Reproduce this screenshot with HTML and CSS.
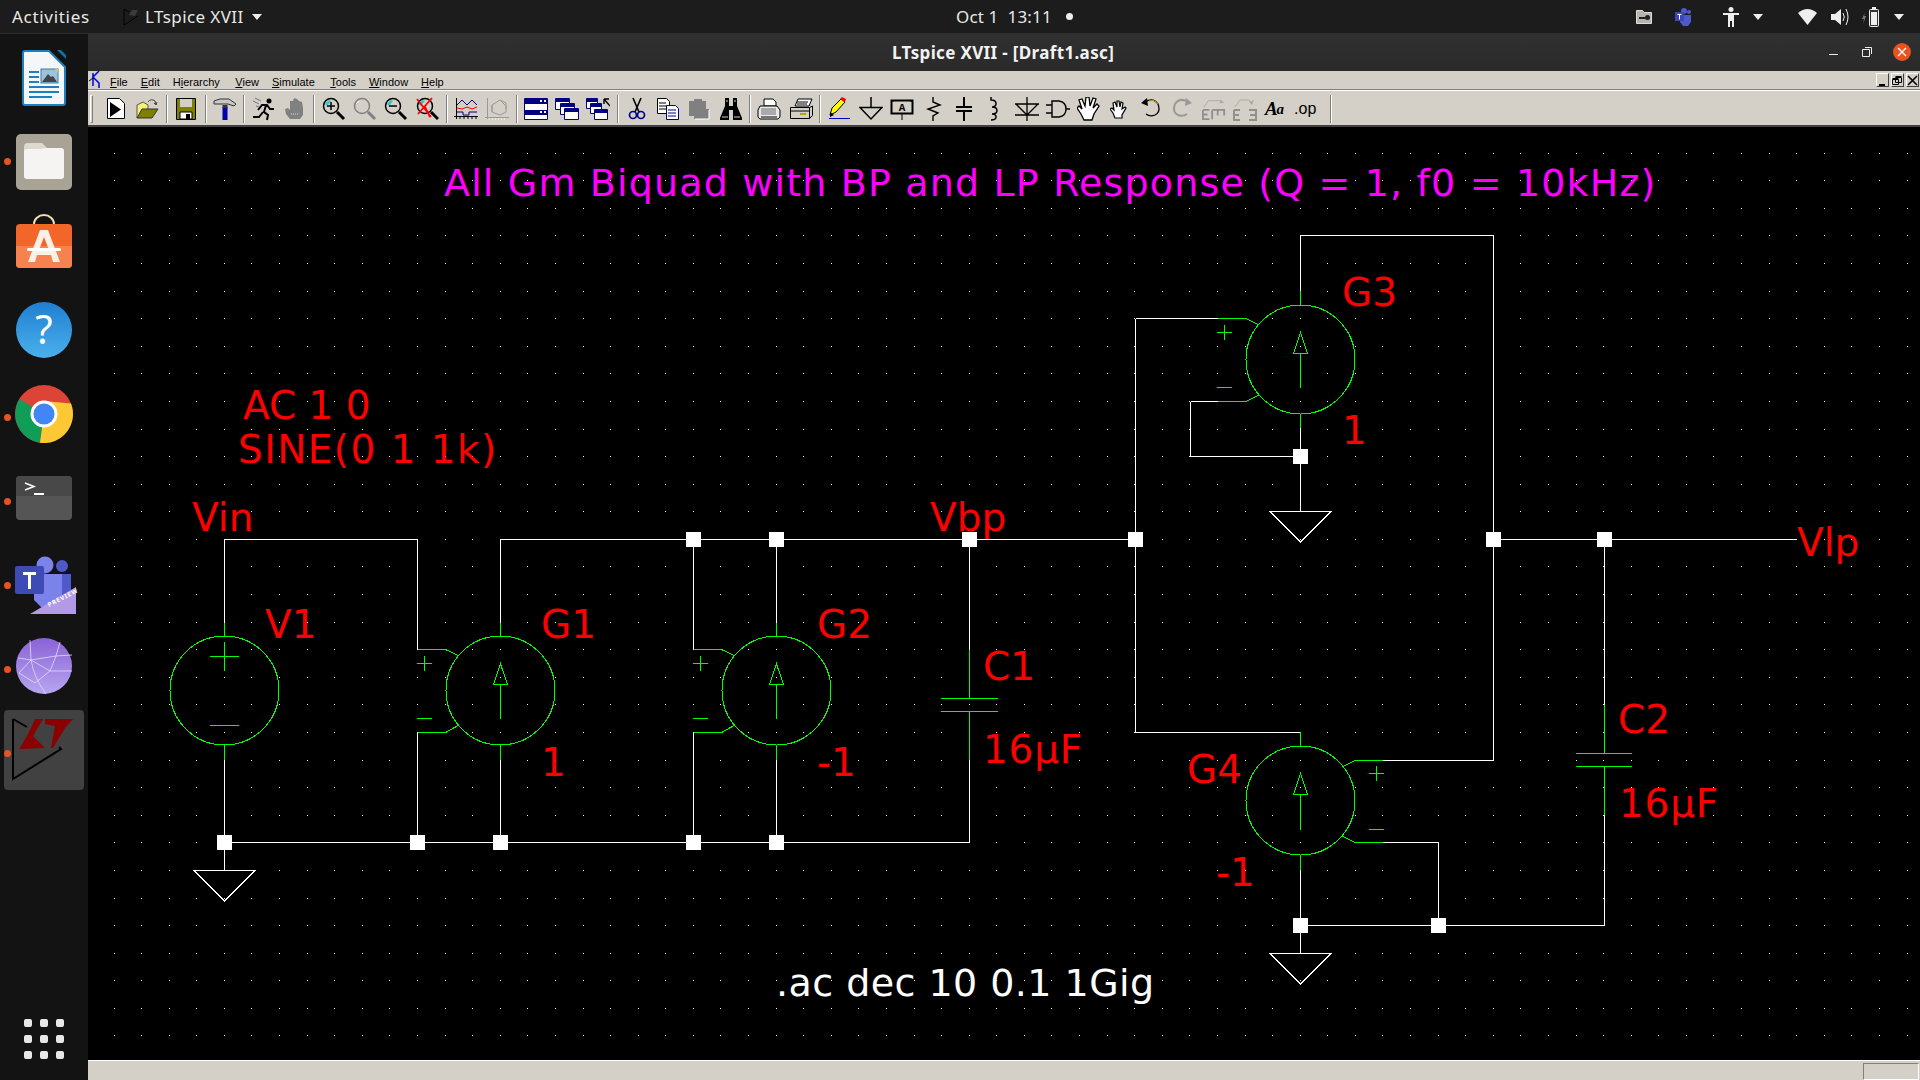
FILE: index.html
```html
<!DOCTYPE html>
<html lang="en">
<head>
  <meta charset="UTF-8">
  <title>LTspice XVII - [Draft1.asc]</title>
  <link rel="stylesheet" href="styles.css">
</head>
<body>
  <!-- gnome top bar -->
  <header class="topbar">
    <span class="activities">Activities</span>
    <span class="appmenu">
      <svg class="appmenu-ic" width="18" height="20" viewBox="0 0 18 20"><path d="M2 2v16L16 9M2 2l5 3" fill="none" stroke="#000"/><path d="M7 8l3-5h6l-3 6z" fill="#3a3a3a"/></svg>
      LTspice XVII
      <i class="caret"></i>
    </span>
    <span class="clock">Oct 1&nbsp; 13:11</span>
    <i class="clock-dot"></i>
    <div class="tray">
      <svg class="tray-key" width="16" height="15" viewBox="0 0 16 15"><path d="M.5 1.500h6l1.500 2h7.500v11H.5z" fill="#b5b5ab" stroke="#ddd"/><circle cx="11.500" cy="8.500" r="2.500" fill="#222"/><path d="M3 8h7v2H3z" fill="#222"/></svg>
      <svg class="tray-teams" width="16" height="20" viewBox="0 0 16 20"><circle cx="9" cy="4" r="3" fill="#5059c9"/><circle cx="14" cy="5" r="2" fill="#5059c9"/><path d="M5 8h11v7l-3 4H8l-3-4z" fill="#5059c9"/><rect y="5" width="9" height="9" fill="#3b46b8"/><path d="M2.500 7.500h4M4.500 7.500v5" stroke="#fff"/></svg>
      <svg class="tray-access" width="16" height="20" viewBox="0 0 16 20"><circle cx="8" cy="2.500" r="2.500" fill="#eee"/><path d="M0 6h16v2h-5v12H9v-6H7v6H5V8H0z" fill="#eee"/></svg>
      <i class="caret caret-access"></i>
      <svg class="tray-wifi" width="19" height="16" viewBox="0 0 19 16"><path d="M0 4q9.500-8 19 0l-9.500 12z" fill="#eee"/></svg>
      <svg class="tray-vol" width="19" height="20" viewBox="0 0 19 20"><path d="M0 7h4l6-5v16l-6-5H0z" fill="#eee"/><path d="M12 6q2.500 4 0 8M15 2q4 8 0 16" fill="none" stroke="#eee"/></svg>
      <svg class="tray-batt" width="18" height="20" viewBox="0 0 18 20"><path d="M3 5L0 12h2l-1 5 3-8H2z" fill="#777"/><rect x="7.500" y="2.500" width="9" height="17" rx="1" fill="#333" stroke="#eee"/><rect x="9" y="5" width="6" height="13" fill="#eee"/><rect x="10" y="0" width="4" height="2" fill="#eee"/></svg>
      <i class="caret caret-last"></i>
    </div>
  </header>

  <div class="desktop">
    <!-- dock -->
    <nav class="dock">
      <svg class="dock-ic" style="top:16px;left:22px" width="44" height="56" viewBox="0 0 44 56"><path d="M35 0h4l5 5v4z" fill="#0f6fa8"/><path d="M3 1h24l16 16v36a2 2 0 0 1-2 2H3a2 2 0 0 1-2-2V3a2 2 0 0 1 2-2z" fill="#f4f6f8" stroke="#1b80bd" stroke-width="2"/><path d="M7 21h10v2H7zM7 26h10v2H7zM7 31h10v2H7zM7 36h30v2H7zM7 41h30v2H7zM7 46h23v2H7z" fill="#1b80bd"/><rect x="19" y="19" width="17" height="14" fill="#9ac3de" stroke="#3a7eaa"/><path d="M20 32l6-8 3 3 2-1 4 6z" fill="#444"/><path d="M33 19h3v4z" fill="#f1c232"/></svg>
      <i class="dock-dot" style="top:124px"></i>
      <svg class="dock-ic" style="top:100px;left:16px" width="56" height="56" viewBox="0 0 56 56"><rect width="56" height="56" rx="5" fill="#a8a395"/><path d="M8 13a4 4 0 0 1 4-4h14l5 5v10H8z" fill="#dcd9d0"/><path d="M8 18a3 3 0 0 1 3-3h14l4-1h16a3 3 0 0 1 3 3v25a3 3 0 0 1-3 3H11a3 3 0 0 1-3-3z" fill="#f5f4f2"/></svg>
      <svg class="dock-ic" style="top:181px;left:16px" width="56" height="53" viewBox="0 0 56 53"><path d="M18 14v-5a10 9 0 0 1 20 0v5" fill="none" stroke="#f4dcb0" stroke-width="2"/><rect y="9" width="56" height="44" rx="4" fill="#f2662a"/><path d="M0 31h56v18a4 4 0 0 1-4 4H4a4 4 0 0 1-4-4z" fill="#f6834f"/><path d="M24 15h8l12 32h-7l-2-7H21l-2 7h-7zM28 22l-5 13h10z" fill="#fdeee6"/><rect x="11" y="33" width="34" height="3" rx="1.500" fill="#fff"/></svg>
      <svg class="dock-ic" style="top:268px;left:16px" width="56" height="56" viewBox="0 0 56 56"><defs><linearGradient id="helpg" x1="0" y1="0" x2="0" y2="1"><stop offset="0" stop-color="#1f7fd1"/><stop offset="1" stop-color="#4bb0ec"/></linearGradient></defs><circle cx="28" cy="28" r="28" fill="url(#helpg)"/><text class="dock-help" x="28" y="42" text-anchor="middle">?</text></svg>
      <i class="dock-dot" style="top:380px"></i>
      <svg class="dock-ic" style="top:351px;left:15px" width="58" height="58" viewBox="0 0 58 58"><circle cx="29" cy="29" r="29" fill="#dc4437"/><path d="M29 29L4.500 14A29 29 0 0 0 25 57.700z" fill="#0f9d58"/><path d="M29 29l-4 28.700A29 29 0 0 0 56 18.500L29 16z" fill="#fcc934"/><circle cx="29" cy="29" r="13.500" fill="#fff"/><circle cx="29" cy="29" r="10.500" fill="#4285f4"/></svg>
      <svg class="dock-ic" style="top:442px;left:16px" width="56" height="44" viewBox="0 0 56 44"><rect width="56" height="44" rx="4" fill="#555"/><path d="M0 4a4 4 0 0 1 4-4h48a4 4 0 0 1 4 4v16H0z" fill="#484848"/><path d="M9 7l9 3.500-9 3.500" fill="none" stroke="#fff" stroke-width="1.500"/><rect x="18" y="17" width="10" height="2" fill="#fff"/></svg>
      <i class="dock-dot" style="top:464px"></i>
      <svg class="dock-ic" style="top:522px;left:15px" width="61" height="58" viewBox="0 0 61 58"><circle cx="30" cy="9" r="8.500" fill="#7b83eb"/><circle cx="47" cy="10" r="6" fill="#5059c9"/><path d="M42 18h14v20l-6 10H42z" fill="#5059c9"/><path d="M19 18h28v26l-10 8H27l-8-8z" fill="#7b83eb"/><rect y="10" width="29" height="28" rx="2" fill="#3f4bb4"/><path d="M8 16h13v3h-5v14h-3V19H8z" fill="#fff"/><path d="M15 58l46-27v27z" fill="#b39ae6"/><text class="dock-preview" x="34" y="51" transform="rotate(-27 34 51)">PREVIEW</text></svg>
      <i class="dock-dot" style="top:548px"></i>
      <svg class="dock-ic" style="top:604px;left:16px" width="56" height="56" viewBox="0 0 56 56"><defs><linearGradient id="purp" x1="0" y1="0" x2="0" y2="1"><stop offset="0" stop-color="#8a62d6"/><stop offset="1" stop-color="#b7a6f0"/></linearGradient></defs><circle cx="28" cy="28" r="28" fill="url(#purp)"/><path d="M2 20L15 22 40 18 56 17M3 35L15 22 34 33 56 33M19 45L34 33 40 18M15 22Q18 40 30 56M15 22L14 2M40 18L44 4M19 45L3 35" fill="none" stroke="#e2daf8" stroke-width=".8"/></svg>
      <i class="dock-dot" style="top:632px"></i>
      <div class="dock-active"></div>
      <svg class="dock-ic" style="top:684px;left:0" width="88" height="64" viewBox="0 0 88 64"><path d="M13 1v60L61 31l-2-2M13 1l14 8" fill="none" stroke="#000" stroke-width="2"/><path d="M19 31Q28 18 35 1h8L33 18l12 12z" fill="#8b0000"/><path d="M45 1h28l-8 9-12 20h-2l4-22-10-2z" fill="#8b0000"/></svg>
      <i class="dock-dot" style="top:716px"></i>
      <div class="dock-grid"><i></i><i></i><i></i><i></i><i></i><i></i><i></i><i></i><i></i></div>
    </nav>

    <main class="app">
      <div class="titlebar">
        <span class="title">LTspice XVII - [Draft1.asc]</span>
        <i class="win-min"></i>
        <svg class="win-restore" width="10" height="10" viewBox="0 0 10 10"><path d="M.5 2.500h7v7h-7zM3 .5h6.500V7" fill="none" stroke="#eee"/></svg>
        <span class="win-close"><svg width="10" height="10" viewBox="0 0 10 10"><path d="M1 1l8 8M9 1l-8 8" stroke="#fff" stroke-width="1.300"/></svg></span>
      </div>

      <div class="menubar">
        <svg class="menu-logo" width="12" height="18" viewBox="0 0 12 18"><path d="M5 2v13M11 0L5 6l6 6v5" fill="none" stroke="#0000e0" stroke-width="1.500"/><path d="M5 7L1 10" stroke="#000"/></svg>
        <span class="menu-item"><u>F</u>ile</span>
        <span class="menu-item"><u>E</u>dit</span>
        <span class="menu-item menu-wide">H<u>i</u>erarchy</span>
        <span class="menu-item"><u>V</u>iew</span>
        <span class="menu-item menu-wide"><u>S</u>imulate</span>
        <span class="menu-item"><u>T</u>ools</span>
        <span class="menu-item"><u>W</u>indow</span>
        <span class="menu-item"><u>H</u>elp</span>
        <div class="mdi">
          <span class="mdi-btn"><svg width="11" height="11" viewBox="0 0 11 11"><path d="M2 9h6v2H2z"/></svg></span>
          <span class="mdi-btn"><svg width="11" height="11" viewBox="0 0 11 11"><path d="M3.500 2.500h6v5h-6zM3.500 1.500h6M.5 4.500h6v5h-6zM.5 3.500h6" fill="none" stroke="#000"/></svg></span>
          <span class="mdi-btn"><svg width="11" height="11" viewBox="0 0 11 11"><path d="M1 1l9 9M10 1l-9 9" stroke="#000" stroke-width="1.600"/></svg></span>
        </div>
      </div>

      <div class="toolbar">
        <i class="grip"></i>
        <span class="tb"><svg viewBox="0 0 24 24"><path d="M3.500 1.500h12l5 5v15h-17z" fill="#fff" stroke="#000"/><path d="M6 5l11 7.500L6 20z"/></svg></span>
        <span class="tb"><svg viewBox="0 0 24 24"><path d="M2 8l6-3 5 3v4l-11 9z" fill="#f6f07a" stroke="#555"/><path d="M2 21l5-9h16l-6 9z" fill="#808000" stroke="#333"/><path d="M13 5q3-4 7-1l1 4M19 6l2 2 1-3" fill="none" stroke="#444"/></svg></span>
        <i class="sep"></i>
        <span class="tb"><svg viewBox="0 0 24 24"><path d="M2.500 1.500h19v21h-19z" fill="#808000" stroke="#000"/><path d="M6 2h12v8H6z" fill="#d4d0c8"/><path d="M6 15h12v7H6z" fill="#fff" stroke="#000"/><path d="M12 17h4v5h-4z"/></svg></span>
        <i class="sep"></i>
        <span class="tb"><svg viewBox="0 0 24 24"><path d="M1 4l6-2h9l7 5-2 2-6-2H1z" fill="#c8c8c8" stroke="#333"/><path d="M9.500 10h5v13h-5z" fill="#0000b0"/><path d="M9.500 8h5v3h-5z" fill="#333"/></svg></span>
        <i class="sep"></i>
        <span class="tb"><svg viewBox="0 0 24 24"><circle cx="17" cy="4" r="2.500"/><path d="M6 13l4-5 5 0 3 4 4 0M14 8l-2 7 4 3-1 5M11 15l-4 5-6 0" fill="none" stroke="#000" stroke-width="2"/><path d="M1 4l6 3M3 1l6 3M4 9l3 1" stroke="#777"/></svg></span>
        <span class="tb"><svg viewBox="0 0 24 24"><path d="M7 22L3 17l-1-5 3-1 2 2V4h3l1-3 3 1 2 2 3 1 1 6v7l-3 4z" fill="#808080"/><path d="M8 17h7" stroke="#ddd" stroke-dasharray="1 1"/></svg></span>
        <i class="sep"></i>
        <span class="tb"><svg viewBox="0 0 24 24"><circle cx="9" cy="9" r="7.500" fill="#d4d0c8" stroke="#000" stroke-width="1.500"/><path d="M3 7l4-4 2 1-4 5z" fill="#2cc"/><path d="M5 9h8M9 5v8" stroke="#000" stroke-width="1.500"/><path d="M15 15l7 7" stroke="#000" stroke-width="3"/></svg></span>
        <span class="tb"><svg viewBox="0 0 24 24"><circle cx="9" cy="9" r="7.500" fill="#d4d0c8" stroke="#808080" stroke-width="1.500"/><path d="M15 15l7 7" stroke="#808080" stroke-width="3"/><path d="M3 7l3-3" stroke="#fff"/></svg></span>
        <span class="tb"><svg viewBox="0 0 24 24"><circle cx="9" cy="9" r="7.500" fill="#d4d0c8" stroke="#000" stroke-width="1.500"/><path d="M3 7l4-4 2 1-4 5z" fill="#2cc"/><path d="M5 9h8" stroke="#000" stroke-width="1.500"/><path d="M15 15l7 7" stroke="#000" stroke-width="3"/></svg></span>
        <span class="tb"><svg viewBox="0 0 24 24"><circle cx="10" cy="9" r="7.500" fill="#d4d0c8" stroke="#000" stroke-width="1.500"/><path d="M4 6l3-3 3 1-5 5z" fill="#2cc"/><path d="M16 15l7 7" stroke="#000" stroke-width="3"/><path d="M2 2l14 18M17 1L3 17M10 10l5 10" stroke="#f00" stroke-width="1.800"/></svg></span>
        <i class="sep"></i>
        <span class="tb"><svg viewBox="0 0 24 24"><path d="M2.500 1v21M0 19.500h24M6 19v3M10 19v3M14 19v3M18 19v3M22 19v3" stroke="#000" fill="none"/><path d="M3 8l5-5 5 5 5-5 5 5" fill="none" stroke="#000080"/><path d="M3 11l5 1 5-2 5 2 5-2" fill="none" stroke="#f00"/><path d="M3 15h6v3h6v-3h8" fill="none" stroke="#000080"/></svg></span>
        <span class="tb"><svg viewBox="0 0 24 24"><path d="M2.500 1v21M0 20.500h24" stroke="#999"/><path d="M7 8l8-5 6 3v9l-6 3-8-3zM7 8v7M15 3l6 6v3" fill="none" stroke="#999"/><path d="M4 22h17" stroke="#fff" stroke-dasharray="1 2"/></svg></span>
        <i class="sep"></i>
        <span class="tb"><svg viewBox="0 0 24 24"><path d="M.5 1.500h23v21H.5z" fill="#fff" stroke="#000080"/><path d="M1 2h22v5H1zM1 13h22v5H1z" fill="#000080"/><path d="M16 3h2v2h-2zM20 3h2v2h-2zM16 14h2v2h-2zM20 14h2v2h-2z" fill="#fff"/></svg></span>
        <span class="tb"><svg viewBox="0 0 24 24" id="cascade"><path d="M.5 1.500h14v11H.5z" fill="#fff" stroke="#000080"/><path d="M1 2h13v3H1z" fill="#000080"/><path d="M5.500 6.500h14v11h-14z" fill="#fff" stroke="#000080"/><path d="M6 7h13v3H6z" fill="#000080"/><path d="M9.500 11.500h14v11h-14z" fill="#fff" stroke="#000080"/><path d="M10 12h13v3H10z" fill="#000080"/></svg></span>
        <span class="tb"><svg viewBox="0 0 24 24"><path d="M.5 1.500h11v10H.5z" fill="#fff" stroke="#000080"/><path d="M1 2h10v3H1z" fill="#000080"/><path d="M4.500 6.500h11v10h-11z" fill="#fff" stroke="#000080"/><path d="M5 7h10v3H5z" fill="#000080"/><path d="M8.500 12.500h13v10h-13z" fill="#fff" stroke="#000080"/><path d="M9 13h12v3H9z" fill="#000080"/><path d="M18 2h5M18 2v5M18 2l6 7" stroke="#000" stroke-width="1.400" fill="none"/></svg></span>
        <i class="sep"></i>
        <span class="tb"><svg viewBox="0 0 24 24"><path d="M8 1l6 14M16 1l-6 14" stroke="#000" stroke-width="1.600"/><circle cx="8" cy="18" r="3.500" fill="none" stroke="#000080" stroke-width="1.700"/><circle cx="16" cy="18" r="3.500" fill="none" stroke="#000080" stroke-width="1.700"/></svg></span>
        <span class="tb"><svg viewBox="0 0 24 24"><path d="M1.500 1.500h9l3 3v12h-12z" fill="#fff" stroke="#000"/><path d="M3 6h7M3 9h7M3 12h7" stroke="#000"/><path d="M10.500 8.500h9l3 3v11h-12z" fill="#fff" stroke="#000080"/><path d="M12 13h8M12 16h8M12 19h8" stroke="#000080"/></svg></span>
        <span class="tb"><svg viewBox="0 0 24 24"><path d="M2 4h5V2h8v2h4v8h3v10H7v-3H2z" fill="#808080"/><path d="M8 22h14v-9" fill="none" stroke="#fff"/></svg></span>
        <span class="tb"><svg viewBox="0 0 24 24"><path d="M6 1h4v8h4V1h4v8l5 12v2h-9V13h-4v10H1v-2L6 9z"/><path d="M3 20h6M15 20h6M7 4h2M15 4h2" stroke="#d4d0c8"/></svg></span>
        <i class="sep"></i>
        <span class="tb"><svg viewBox="0 0 24 24"><path d="M7 9V2h9l3 3v4z" fill="#fff" stroke="#000"/><path d="M3 9h17l3 4v7l-2 2H3l-2-2v-7z" fill="#e8e8e8" stroke="#000"/><path d="M4 11h15v7H4z" fill="#aaa"/><path d="M4 20h16" stroke="#000"/></svg></span>
        <span class="tb"><svg viewBox="0 0 24 24"><path d="M6 9l3-7h14l-3 7z" fill="#fff" stroke="#000"/><path d="M8 5h11M8 7h10" stroke="#000"/><path d="M1.500 10.500h19v11h-19zM20.500 21.500l3-3V9l-3 1.500" fill="#d4d0c8" stroke="#000"/><path d="M1 14h20" stroke="#000"/><path d="M11 17h6" stroke="#c0a000" stroke-width="2"/></svg></span>
        <i class="sep"></i>
        <span class="tb"><svg viewBox="0 0 24 24"><path d="M3 18l2-7 9-9 4 3-9 10z" fill="#ff0" stroke="#000"/><path d="M13 2l2-2 4 2-1 3z" fill="#f00"/><path d="M3 15l4 3-4 2z"/><path d="M2 21.500h21" stroke="#0000c0"/></svg></span>
        <span class="tb"><svg viewBox="0 0 24 24"><path d="M12 0v10M1 10.500h22L12 22z" fill="none" stroke="#000" stroke-width="1.500"/></svg></span>
        <span class="tb"><svg viewBox="0 0 24 24"><path d="M1.500 3.500h21v13h-21z" fill="#d4d0c8" stroke="#000" stroke-width="2"/><path d="M12 17v6M1 4h3M20 4h3" stroke="#000"/><text class="tb-a" x="12" y="14" text-anchor="middle">A</text></svg></span>
        <span class="tb"><svg viewBox="0 0 24 24"><path d="M12 0v5l7 3-12 4 10 4-5 3v5" fill="none" stroke="#000" stroke-width="1.400"/></svg></span>
        <span class="tb"><svg viewBox="0 0 24 24"><path d="M12 0v9M4 10h16M4 14h16M12 15v9" fill="none" stroke="#000" stroke-width="2"/></svg></span>
        <span class="tb"><svg viewBox="0 0 24 24"><path d="M8 0v3q5 0 5 3.500T9 10q5 0 5 3.500T9 17q4 0 4 3t-5 3" fill="none" stroke="#000" stroke-width="1.500"/></svg></span>
        <span class="tb"><svg viewBox="0 0 24 24"><path d="M12 0v24M0 7h24M0 18h24M1 7l11 11L23 7" fill="none" stroke="#000" stroke-width="1.300"/></svg></span>
        <span class="tb"><svg viewBox="0 0 24 24"><path d="M6 4h7q7 1 7 8t-7 8H6zM6 4v16M0 8h6M0 16h6M20 12h4" fill="none" stroke="#000" stroke-width="1.400"/></svg></span>
        <span class="tb"><svg viewBox="0 0 24 24"><path d="M7 23l-3-6-4-6 2-2 3 3L2 3l3-1 3 7 1-9h3l1 9 3-8 3 1-3 9 4-4 2 2-5 8-2 6z" fill="#fff" stroke="#000" stroke-width="1.300"/></svg></span>
        <span class="tb"><svg viewBox="0 0 20 20" class="tb-small"><path d="M5 19l-2-5-3-4 2-1 2 2-1-7 2-1 2 5V2h2l1 6 1-5 2 1-1 6 3-2 1 1-4 7v3z" fill="#fff" stroke="#000" stroke-width="1.200"/></svg></span>
        <span class="tb"><svg viewBox="0 0 24 24"><path d="M6 5q8-5 13 2 3 8-3 11-5 2-9-1" fill="none" stroke="#000" stroke-width="1.300"/><path d="M8 1L2 6l7 3z"/><path d="M10 4q6-2 9 3" fill="none" stroke="#c0a000"/></svg></span>
        <span class="tb"><svg viewBox="0 0 24 24"><path d="M18 5q-8-5-13 2-3 8 3 11 5 2 9-1" fill="none" stroke="#999" stroke-width="2"/><path d="M16 1l6 5-7 3z" fill="#999"/></svg></span>
        <span class="tb"><svg viewBox="0 0 26 24"><path d="M1 13h7M1 13v10h7M1 18h5M11 13v10M11 13h6v6M17 13h7v6" fill="none" stroke="#909090" stroke-width="2"/><path d="M2 10l5-7h13l3 2" fill="none" stroke="#aaa"/><path d="M20 2l4 3-5 1z" fill="#aaa"/></svg></span>
        <span class="tb"><svg viewBox="0 0 24 24"><path d="M1 13h6M1 13v10h6M1 18h5M16 13h7v10h-7M17 18h6" fill="none" stroke="#909090" stroke-width="2"/><path d="M2 10l5-7h9l3 4" fill="none" stroke="#aaa"/><path d="M21 3l-2 5-3-3z" fill="#aaa"/></svg></span>
        <span class="tb tb-aa">A<small>a</small></span>
        <span class="tb tb-op">.op</span>
        <i class="sep sep-last"></i>
      </div>

      <div class="canvas">
        <svg id="sheet" class="sheet" width="1828" height="933" viewBox="89 127 1828 933">
          <path id="dots" class="dots"></path>

          <!-- wires -->
          <path class="wire" d="M224.500 624V539.500H417.500V650M417.500 732.500V842.500M224.500 760V870M224.500 842.500H969.500V760"/>
          <path class="wire" d="M500.500 624V539.500H1135.500M500.500 760V842.500M693.500 539.500V650M693.500 732.500V842.500M776.500 539.500V624M776.500 760V842.500M969.500 539.500V650"/>
          <path class="wire" d="M1135.500 318.500V732.500H1300.500V746M1135.500 318.500H1218M1190.500 401.500H1218M1190.500 401.500V456.500H1300.500M1300.500 305V235.500H1493.500V760.500H1383M1300.500 414V511"/>
          <path class="wire" d="M1493.500 539.500H1796M1604.500 539.500V705M1604.500 815V925.500H1300.500M1300.500 870V953M1383 842.500H1438.500V925.500"/>

          <!-- grounds -->
          <path class="ground" d="M194 870.500H255L224.500 901Z"/>
          <path class="ground" d="M1270 511.500H1331L1300.500 542Z"/>
          <path class="ground" d="M1270 953.500H1331L1300.500 984Z"/>

          <!-- junctions -->
          <g class="dots-j">
            <rect x="217" y="835" width="15" height="15"/><rect x="410" y="835" width="15" height="15"/>
            <rect x="493" y="835" width="15" height="15"/><rect x="686" y="835" width="15" height="15"/>
            <rect x="769" y="835" width="15" height="15"/><rect x="686" y="532" width="15" height="15"/>
            <rect x="769" y="532" width="15" height="15"/><rect x="962" y="532" width="15" height="15"/>
            <rect x="1128" y="532" width="15" height="15"/><rect x="1486" y="532" width="15" height="15"/>
            <rect x="1597" y="532" width="15" height="15"/><rect x="1293" y="449" width="15" height="15"/>
            <rect x="1293" y="918" width="15" height="15"/><rect x="1431" y="918" width="15" height="15"/>
          </g>

          <!-- V1 -->
          <g class="sym">
            <circle cx="224.500" cy="690.500" r="54.500"/>
            <path d="M224.500 623V636M224.500 745V760M210 656.500H239M224.500 642V671M210 725.500H239"/>
          </g>

          <!-- G1, G2 -->
          <g class="sym">
            <circle cx="500.500" cy="690.500" r="54.500"/>
            <path d="M500.500 623V636M500.500 745V760M417.500 649.500H445.500L459 656M417.500 732.500H445.500L459 725M417 663.500H432M424.500 656V671M417 718.500H432M500.500 664L493.500 684.500H507.500ZM500.500 684.500V719"/>
            <circle cx="776.500" cy="690.500" r="54.500"/>
            <path d="M776.500 623V636M776.500 745V760M693.500 649.500H721.500L735 656M693.500 732.500H721.500L735 725M693 663.500H708M700.500 656V671M693 718.500H708M776.500 664L769.500 684.500H783.500ZM776.500 684.500V719"/>
          </g>

          <!-- C1, C2 -->
          <g class="sym">
            <path d="M969.500 650V698.500M941 698.500H998M941 711.500H998M969.500 711.500V760"/>
            <path d="M1604.500 705V753.500M1576 753.500H1632M1576 766.500H1632M1604.500 766.500V815"/>
          </g>

          <!-- G3, G4 -->
          <g class="sym">
            <circle cx="1300.500" cy="359.500" r="54.500"/>
            <path d="M1300.500 291V305M1300.500 414V428M1218 318.500H1246L1259 325M1218 401.500H1246L1259 395M1217 332.500H1232M1224.500 325V340M1217 387.500H1232M1300.500 332.500L1293.500 353.500H1307.500ZM1300.500 353.500V388"/>
            <circle cx="1300.500" cy="800.500" r="54.500"/>
            <path d="M1300.500 732V746M1300.500 855V870M1383 760.500H1355L1342 767M1383 842.500H1355L1342 836M1369 773.500H1384M1376.500 766V781M1369 829.500H1384M1300.500 773.500L1293.500 794.500H1307.500ZM1300.500 794.500V830"/>
          </g>

          <!-- labels -->
          <text class="lbl-title" x="444" y="195.500">All Gm Biquad with BP and LP Response (Q = 1, f0 = 10kHz)</text>
          <text class="lbl" x="243" y="419">AC 1 0</text>
          <text class="lbl lbl-sine" x="238" y="463">SINE(0 1 1k)</text>
          <text class="lbl" x="192" y="531">Vin</text>
          <text class="lbl" x="265" y="638">V1</text>
          <text class="lbl" x="541" y="638">G1</text>
          <text class="lbl" x="541" y="776">1</text>
          <text class="lbl" x="817" y="638">G2</text>
          <text class="lbl" x="817" y="776">-1</text>
          <text class="lbl" x="930" y="531">Vbp</text>
          <text class="lbl" x="983" y="680">C1</text>
          <text class="lbl lbl-cap" x="983" y="763">16µF</text>
          <text class="lbl" x="1342" y="306">G3</text>
          <text class="lbl" x="1342" y="444">1</text>
          <text class="lbl" x="1187" y="783">G4</text>
          <text class="lbl" x="1216" y="886">-1</text>
          <text class="lbl" x="1618" y="733">C2</text>
          <text class="lbl lbl-cap" x="1619" y="817">16µF</text>
          <text class="lbl" x="1797" y="556">Vlp</text>
          <text class="lbl-dir" x="776" y="996">.ac dec 10 0.1 1Gig</text>
        </svg>
      </div>

      <div class="statusbar"><span class="status-pane"></span></div>
    </main>
  </div>
  <script src="script.js"></script>
</body>
</html>
```

FILE: styles.css
```css
* {
  box-sizing: border-box;
}

html, body {
  margin: 0;
  height: 100%;
  overflow: hidden;
}

body {
  display: flex;
  flex-direction: column;
  width: 1920px;
  height: 1080px;
  background: #000;
  font-family: "Noto Sans", sans-serif;
}

/* top bar */
.topbar {
  display: flex;
  align-items: center;
  flex: 0 0 34px;
  background: #1c1c1c;
  color: #e8e8e4;
  font-size: 17px;
  border-bottom: 1px solid #2e2e2e;
}

.activities {
  margin-left: 12px;
  width: 77px;
  letter-spacing: .7px;
  white-space: nowrap;
}

.appmenu {
  display: flex;
  align-items: center;
  margin-left: 33px;
  gap: 5px;
  width: 160px;
  letter-spacing: .4px;
  white-space: nowrap;
}

.caret {
  display: inline-block;
  width: 0;
  height: 0;
  border-left: 5.5px solid transparent;
  border-right: 5.5px solid transparent;
  border-top: 6px solid #eee;
}

.appmenu .caret {
  margin-left: 3px;
}

.clock {
  margin-left: 674px;
  width: 103px;
  letter-spacing: .15px;
  white-space: nowrap;
}

.clock-dot {
  width: 7px;
  height: 7px;
  border-radius: 50%;
  background: #eee;
  margin-left: 7px;
}

.tray {
  display: flex;
  align-items: center;
  margin-left: auto;
  padding-right: 16px;
}

.tray-teams { margin-left: 23px; }
.tray-access { margin-left: 32px; }
.caret-access { margin-left: 14px; }
.tray-wifi { margin-left: 35px; }
.tray-vol { margin-left: 14px; }
.tray-batt { margin-left: 12px; }
.caret-last { margin-left: 14px; }

.desktop {
  display: flex;
  flex: 1;
  min-height: 0;
}

/* dock */
.dock {
  position: relative;
  flex: 0 0 88px;
  background: #131313;
}

.dock-ic {
  position: absolute;
  overflow: visible;
}

.dock-dot {
  position: absolute;
  left: 4px;
  width: 7px;
  height: 7px;
  border-radius: 50%;
  background: #e9531f;
}

.dock-active {
  position: absolute;
  top: 676px;
  left: 4px;
  width: 80px;
  height: 80px;
  border-radius: 4px;
  background: #414141;
}

.dock-help {
  font: 40px "Noto Sans", sans-serif;
  fill: #fff;
}

.dock-preview {
  font: bold 6px "Noto Sans", sans-serif;
  fill: #fff;
  letter-spacing: 1px;
}

.dock-grid {
  position: absolute;
  top: 985px;
  left: 24px;
  display: grid;
  grid-template-columns: repeat(3, 8px);
  gap: 8px;
}

.dock-grid i {
  height: 8px;
  border-radius: 2px;
  background: #e8e8e8;
}

/* main window */
.app {
  display: flex;
  flex-direction: column;
  flex: 1;
  min-width: 0;
}

.titlebar {
  position: relative;
  display: flex;
  align-items: center;
  flex: 0 0 37px;
  background: linear-gradient(#303030, #2a2a2a);
  color: #f2f2f2;
}

.title {
  margin-left: 804px;
  font-size: 17px;
  font-weight: 700;
  letter-spacing: .35px;
  white-space: nowrap;
}

.win-min {
  position: absolute;
  left: 1741px;
  top: 20px;
  width: 9px;
  height: 1px;
  background: #eee;
}

.win-restore {
  position: absolute;
  left: 1774px;
  top: 13px;
}

.win-close {
  position: absolute;
  left: 1805px;
  top: 9px;
  display: flex;
  align-items: center;
  justify-content: center;
  width: 18px;
  height: 18px;
  border-radius: 50%;
  background: #e9531f;
}

.menubar {
  display: flex;
  align-items: center;
  flex: 0 0 19px;
  background: #d4d0c8;
  color: #000;
  font-size: 11px;
  font-family: "Liberation Sans", sans-serif;
  border-bottom: 1px solid #808080;
}

.menu-logo {
  margin-right: 10px;
}

.menu-item {
  margin-right: 13px;
  padding-top: 3px;
  white-space: nowrap;
}

.menu-wide {
  margin-right: 15.5px;
}

.mdi {
  display: flex;
  margin-left: auto;
  margin-right: 1px;
  gap: 2px;
}

.mdi-btn {
  display: flex;
  align-items: center;
  justify-content: center;
  width: 13px;
  height: 14px;
  background: #d4d0c8;
  border: 1px solid;
  border-color: #fff #404040 #404040 #fff;
}

.toolbar {
  display: flex;
  align-items: center;
  flex: 0 0 37px;
  padding-left: 2px;
  padding-top: 2px;
  background: #d4d0c8;
  border-top: 1px solid #fff;
  border-bottom: 2px solid #404040;
}

.grip {
  width: 3px;
  height: 28px;
  border: 1px solid;
  border-color: #fff #808080 #808080 #fff;
  margin-right: 7.5px;
}

.tb {
  display: flex;
  align-items: center;
  justify-content: center;
  flex: 0 0 31.2px;
  height: 24px;
}

.tb svg {
  width: 24px;
  height: 24px;
}

.tb svg.tb-small {
  width: 20px;
  height: 20px;
}

.tb-a {
  font: bold 11px "Liberation Mono", monospace;
}

.tb-aa {
  margin-left: -2px;
  font: italic bold 19px "Liberation Serif", serif;
  letter-spacing: -1px;
}

.tb-aa small {
  font-size: 15px;
}

.tb-op {
  font: 16px "Liberation Sans", sans-serif;
}

.sep {
  flex: 0 0 7.6px;
  height: 28px;
  background: linear-gradient(90deg, transparent 3px, #808080 3px, #808080 4px, #fff 4px, #fff 5px, transparent 5px);
}

.sep-last {
  margin-left: 6px;
}

/* schematic sheet */
.canvas {
  flex: 0 0 933px;
  margin-left: 1px;
  margin-right: 3px;
  background: #000;
  overflow: hidden;
}

.sheet {
  display: block;
}

.dots {
  fill: #fff;
  shape-rendering: crispEdges;
}

.wire, .ground, .sym path, .sym circle {
  fill: none;
  stroke-width: 1;
}

.wire {
  stroke: #fff;
  shape-rendering: crispEdges;
}

.ground {
  stroke: #fff;
  shape-rendering: crispEdges;
}

.dots-j {
  fill: #fff;
  shape-rendering: crispEdges;
}

.sym path, .sym circle {
  stroke: #0f0;
  shape-rendering: crispEdges;
}

.lbl, .lbl-title, .lbl-dir {
  font-family: "DejaVu Sans", sans-serif;
  font-size: 39px;
  fill: #f00;
}

.lbl-sine {
  letter-spacing: 1.45px;
}

.lbl-cap {
  letter-spacing: .8px;
}

.lbl-title {
  font-size: 38px;
  letter-spacing: 1.16px;
  fill: #f0f;
}

.lbl-dir {
  font-size: 38px;
  letter-spacing: .45px;
  fill: #fff;
}

.statusbar {
  display: flex;
  justify-content: flex-end;
  flex: 1;
  background: #d4d0c8;
  border-top: 1px solid #fff;
}

.status-pane {
  width: 56px;
  margin: 2px 1px 0 0;
  border: 1px solid;
  border-color: #808080 #fff #fff #808080;
}
```

FILE: script.js
```js
// grid dots of the sheet, on whole pixels like the real program
var d = '';
for (var i = -5; i < 62; i++) {
  for (var j = -15; j < 20; j++) {
    var x = Math.floor(224.4 + i * 27.585);
    var y = Math.floor(539.4 + j * 27.585);
    d += 'M' + x + ' ' + y + 'h1v1h-1z';
  }
}
document.getElementById('dots').setAttribute('d', d);
```
